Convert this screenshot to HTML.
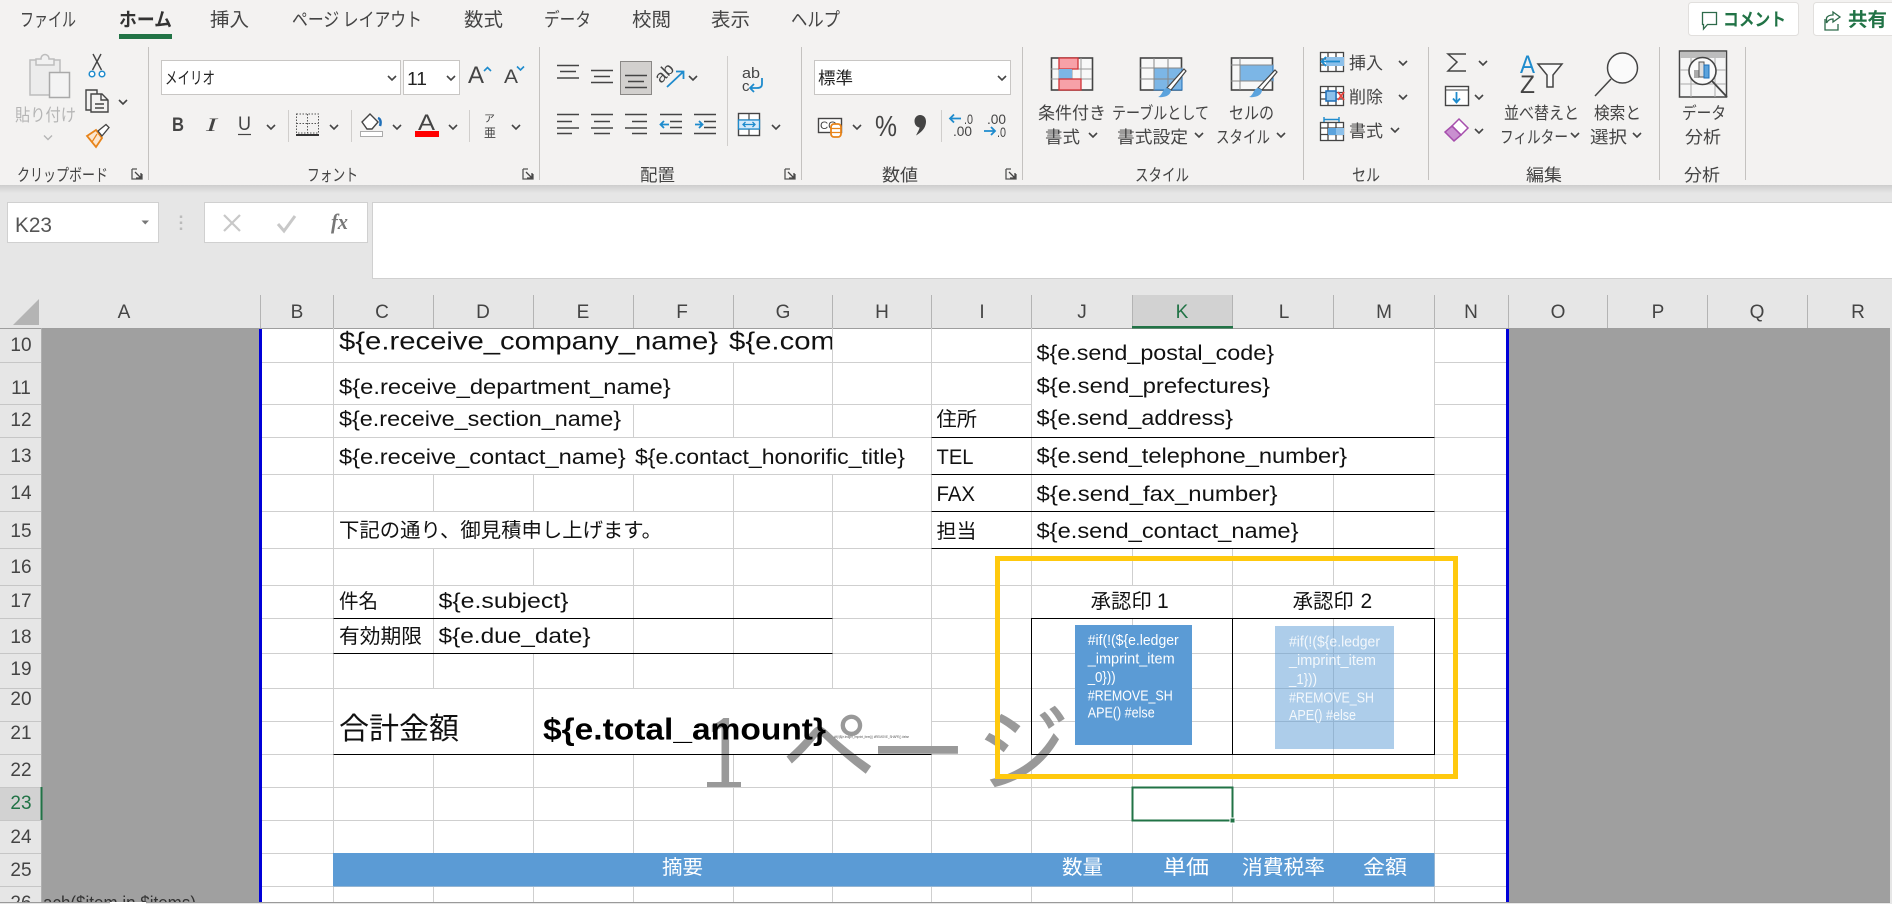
<!DOCTYPE html>
<html lang="ja"><head><meta charset="utf-8"><title>Excel</title>
<style>
html,body{margin:0;padding:0;background:#e6e6e6;width:1892px;height:904px;overflow:hidden}
svg{display:block;position:absolute;left:0;top:0}
text{font-family:"Liberation Sans","Noto Sans CJK JP",sans-serif;white-space:pre}
.j text,text.j{font-family:"Noto Sans CJK JP","Liberation Sans",sans-serif}
.rb text{fill:#444}
.hd text{fill:#444;font-size:19px;text-anchor:middle}
.cell text{fill:#111;font-size:21px}
.i{fill:none;stroke:#444;stroke-width:1.4}
.bl{fill:none;stroke:#1e8bcd;stroke-width:1.8}
</style></head><body>
<svg width="1892" height="904" viewBox="0 0 1892 904" xmlns="http://www.w3.org/2000/svg">
<defs>
<path id="c" d="M-4-2L0 2L4-2" fill="none" stroke="#444" stroke-width="1.6"/>
<g id="ln" fill="none" stroke="#555" stroke-width="1.3"><path d="M1 1H6M1 1V11H11V6"/><path d="M4 4L10 10M10 5V10H5" stroke="#444"/></g>
<linearGradient id="sh" x1="0" y1="0" x2="0" y2="1"><stop offset="0" stop-color="#cdcdcd"/><stop offset="1" stop-color="#e6e6e6"/></linearGradient>
<clipPath id="cp1"><rect x="334" y="329" width="498" height="33"/></clipPath>
<clipPath id="cp2"><rect x="43" y="880" width="216" height="22"/></clipPath>
<clipPath id="cp3"><rect x="0" y="887" width="42" height="15"/></clipPath>
</defs>

<!-- backgrounds -->
<rect width="1892" height="904" fill="#e6e6e6"/>
<rect width="1892" height="185" fill="#f3f2f1"/>
<rect y="185" width="1892" height="8" fill="url(#sh)"/>

<!-- tabs -->
<g class="rb j" font-size="19">
<text x="20" y="26" textLength="56" lengthAdjust="spacingAndGlyphs">ファイル</text>
<text x="119" y="26" textLength="53" lengthAdjust="spacingAndGlyphs" font-weight="700" style="fill:#333">ホーム</text>
<text x="210" y="26" textLength="39" lengthAdjust="spacingAndGlyphs">挿入</text>
<text x="292" y="26" textLength="130" lengthAdjust="spacingAndGlyphs">ページ レイアウト</text>
<text x="464" y="26" textLength="39" lengthAdjust="spacingAndGlyphs">数式</text>
<text x="544" y="26" textLength="47" lengthAdjust="spacingAndGlyphs">データ</text>
<text x="632" y="26" textLength="39" lengthAdjust="spacingAndGlyphs">校閲</text>
<text x="711" y="26" textLength="39" lengthAdjust="spacingAndGlyphs">表示</text>
<text x="791" y="26" textLength="49" lengthAdjust="spacingAndGlyphs">ヘルプ</text>
</g>
<rect x="119" y="34" width="53" height="5" fill="#217346"/>

<!-- comment / share -->
<rect x="1688.500" y="2.500" width="110" height="33" rx="3" fill="#fff" stroke="#e1dfdd"/>
<rect x="1813.500" y="2.500" width="100" height="33" rx="3" fill="#fff" stroke="#e1dfdd"/>
<path d="M1702.500 12.500H1716.500V24.500H1707.500L1703.500 29V24.500H1702.500Z" fill="none" stroke="#2d6a4a" stroke-width="1.3"/>
<text class="j" x="1723" y="26" font-size="18" font-weight="700" fill="#217346" textLength="63" lengthAdjust="spacingAndGlyphs">コメント</text>
<path d="M1833 12L1840 17L1833 22V19C1830 19 1828 20 1826.500 23V18C1827.500 16 1830 15 1833 15ZM1825 19V30H1838V24" fill="none" stroke="#2d6a4a" stroke-width="1.3"/>
<text class="j" x="1848" y="26" font-size="19" font-weight="700" fill="#217346" textLength="39" lengthAdjust="spacingAndGlyphs">共有</text>

<!-- group separators -->
<path d="M148.500 47V180M539.500 47V180M801.500 47V180M1022.500 47V180M1303.500 47V180M1428.500 47V180M1659.500 47V180M1745.500 47V180" stroke="#c4c2c0" fill="none"/>

<!-- group labels -->
<g class="rb j" font-size="17">
<text x="17" y="181" textLength="91" lengthAdjust="spacingAndGlyphs">クリップボード</text>
<text x="307" y="181" textLength="51" lengthAdjust="spacingAndGlyphs">フォント</text>
<text x="640" y="181" textLength="35" lengthAdjust="spacingAndGlyphs">配置</text>
<text x="882" y="181" textLength="36" lengthAdjust="spacingAndGlyphs">数値</text>
<text x="1135" y="181" textLength="54" lengthAdjust="spacingAndGlyphs">スタイル</text>
<text x="1352" y="181" textLength="28" lengthAdjust="spacingAndGlyphs">セル</text>
<text x="1526" y="181" textLength="36" lengthAdjust="spacingAndGlyphs">編集</text>
<text x="1684" y="181" textLength="36" lengthAdjust="spacingAndGlyphs">分析</text>
</g>
<use href="#ln" x="131" y="168"/><use href="#ln" x="522" y="168"/><use href="#ln" x="784" y="168"/><use href="#ln" x="1005" y="168"/>

<!-- clipboard -->
<rect x="30" y="60" width="30" height="35" fill="#ececec" stroke="#bdbdbd" stroke-width="1.500"/>
<path d="M36 65V59H41C41 53 49 53 49 59H54V65Z" fill="#f1f1f1" stroke="#bdbdbd" stroke-width="1.500"/>
<rect x="49.500" y="72.500" width="20" height="25" fill="#f3f3f3" stroke="#a9a9a9" stroke-width="1.500"/>
<text class="j" x="15" y="121" font-size="17" fill="#b5b5b5" textLength="61" lengthAdjust="spacingAndGlyphs">貼り付け</text>
<path d="M44 135.500L48 139.500L52 135.500" fill="none" stroke="#b5b5b5" stroke-width="1.400"/>
<path d="M92.500 70L101 54M101.500 70L93 54" class="i"/>
<circle cx="92" cy="74" r="2.800" fill="#fff" stroke="#1e8bcd" stroke-width="1.500"/><circle cx="102" cy="74" r="2.800" fill="#fff" stroke="#1e8bcd" stroke-width="1.500"/>
<path d="M91 110H86V90H97V94M91 94H102L108 100V112H91ZM101 94V100H108M95 104H104M95 108H104" class="i" fill="none"/>
<use href="#c" x="123" y="102"/>
<path d="M87 136L96 130L102 138L96 147Z" fill="#fbe6cf" stroke="#e8841a" stroke-width="1.800"/>
<path d="M92 142L97 134" stroke="#e8841a" stroke-width="1.200"/>
<path d="M98 131L106 124.500L109 127.500L102 136Z" fill="#fff" stroke="#444" stroke-width="1.300"/>

<!-- font -->
<rect x="161.500" y="60.500" width="239" height="34" fill="#fff" stroke="#c8c6c4"/>
<rect x="403.500" y="60.500" width="56" height="34" fill="#fff" stroke="#c8c6c4"/>
<text class="j" x="165" y="84" font-size="17" fill="#222" textLength="50" lengthAdjust="spacingAndGlyphs">メイリオ</text>
<text x="407" y="85" font-size="18" fill="#222" textLength="20" lengthAdjust="spacingAndGlyphs">11</text>
<use href="#c" x="392" y="78"/><use href="#c" x="451" y="78"/>
<text x="468" y="83" font-size="24" fill="#444" textLength="16" lengthAdjust="spacingAndGlyphs">A</text>
<path d="M484 71L487.500 67.500L491 71" fill="none" stroke="#1e8bcd" stroke-width="1.600"/>
<text x="504" y="83" font-size="19" fill="#444" textLength="14" lengthAdjust="spacingAndGlyphs">A</text>
<path d="M517 66.500L520.500 70L524 66.500" fill="none" stroke="#1e8bcd" stroke-width="1.600"/>
<text x="172" y="131" font-size="19" font-weight="700" fill="#444" textLength="12" lengthAdjust="spacingAndGlyphs">B</text>
<text x="206" y="131" font-size="19" font-style="italic" fill="#444" textLength="11" lengthAdjust="spacingAndGlyphs" style="font-family:'Liberation Serif',serif">I</text>
<text x="238" y="130" font-size="19" fill="#444" textLength="13" lengthAdjust="spacingAndGlyphs">U</text><path d="M238 134.500H251" stroke="#444" stroke-width="1.200"/>
<use href="#c" x="271" y="127"/>
<path d="M288.500 110V142M351.500 110V142M469.500 110V142M941.500 110V142" stroke="#d0cecc"/>
<path d="M296.500 114H318.500V133H296.500ZM307.500 114V133M296.500 123.500H318.500" fill="none" stroke="#555" stroke-dasharray="1.500 1.500"/>
<rect x="296" y="134" width="23" height="2" fill="#333"/>
<use href="#c" x="334" y="127"/>
<path d="M362 122L370 114L378 122L372 129L367 129Z" fill="#fff" stroke="#444" stroke-width="1.400"/>
<path d="M378 118C381 119 381 123 380 126" fill="none" stroke="#1e6fb8" stroke-width="2.500"/>
<rect x="360.500" y="131.500" width="22" height="5" fill="#fff" stroke="#aaa"/>
<use href="#c" x="397" y="127"/>
<text x="418" y="130" font-size="22" fill="#444" textLength="17" lengthAdjust="spacingAndGlyphs">A</text>
<rect x="415" y="131" width="24" height="6" fill="#f00"/>
<use href="#c" x="453" y="127"/>
<text class="j" x="484" y="122" font-size="10" fill="#444" textLength="11" lengthAdjust="spacingAndGlyphs">ア</text>
<text class="j" x="484" y="137" font-size="12" fill="#444" textLength="12" lengthAdjust="spacingAndGlyphs">亜</text>
<use href="#c" x="516" y="127"/>

<!-- alignment -->
<rect x="620.500" y="61.500" width="31" height="33" fill="#d2d0ce" stroke="#8a8886"/>
<path d="M557 65.500H579M560 71.500H576M557 78H579M591 70.500H613M594 76.500H610M591 82.500H613M625 75.500H647M628 81.500H644M625 87.500H647" stroke="#444" stroke-width="1.500" fill="none"/>
<text x="661" y="84" font-size="17" fill="#444" transform="rotate(-45 661 84)" textLength="20" lengthAdjust="spacingAndGlyphs">ab</text>
<path d="M667 87L683 72M676 71.500H683.500V79" class="bl"/>
<use href="#c" x="693" y="78"/>
<path d="M727.500 56V146" stroke="#d0cecc"/>
<text x="742" y="78" font-size="15" fill="#444" textLength="18" lengthAdjust="spacingAndGlyphs">ab</text>
<text x="742" y="91" font-size="15" fill="#444">c</text>
<path d="M762 78V84C762 87 760 88 757 88H750M754 84L750 88L754 92" class="bl"/>
<path d="M557 114.500H579M557 121.500H572M557 128H579M557 133.500H572M591 114.500H613M594 121.500H610M591 128H613M594 133.500H610M625 114.500H647M632 121.500H647M625 128H647M632 133.500H647" stroke="#444" stroke-width="1.500" fill="none"/>
<path d="M660 114.500H682M670 121.500H682M670 127.500H682M660 133.500H682M694 114.500H716M704 121.500H716M704 127.500H716M694 133.500H716" stroke="#444" stroke-width="1.500" fill="none"/>
<path d="M669 124.500H661M664 121L660.500 124.500L664 128M695 124.500H702.500M699 121L702.500 124.500L699 128" class="bl"/>
<rect x="738.500" y="113.500" width="21" height="22" fill="#fff" stroke="#444" stroke-width="1.400"/>
<path d="M738.500 120H759.500M738.500 129H759.500M749 113.500V120M749 129V135.500" stroke="#444" stroke-width="1.200"/>
<path d="M738.500 120H759.500V129H738.500Z" fill="#d7eafa" stroke="#1e8bcd" stroke-width="1.300"/>
<path d="M743 124.500H755M745.500 122L743 124.500L745.500 127M752.500 122L755 124.500L752.500 127" fill="none" stroke="#1e8bcd" stroke-width="1.300"/>
<use href="#c" x="776" y="127"/>

<!-- number -->
<rect x="814.500" y="60.500" width="196" height="34" fill="#fff" stroke="#c8c6c4"/>
<text class="j" x="818" y="84" font-size="17" fill="#222" textLength="35" lengthAdjust="spacingAndGlyphs">標準</text>
<use href="#c" x="1002" y="78"/>
<rect x="818.500" y="118.500" width="23" height="14" fill="#fff" stroke="#444" stroke-width="1.400"/>
<text x="820" y="129" font-size="11" fill="#444" textLength="17" lengthAdjust="spacingAndGlyphs">CO</text>
<rect x="831" y="124" width="10" height="13" rx="3" fill="#fff" stroke="#e8841a" stroke-width="1.800"/>
<path d="M831 128.500H841M831 132.500H841" stroke="#e8841a" stroke-width="1.200"/>
<use href="#c" x="857" y="127"/>
<text x="875" y="136" font-size="29" fill="#444" textLength="22" lengthAdjust="spacingAndGlyphs">%</text>
<path d="M920 115C923.500 115 926 117.500 926 121.500C926 127.500 922 132 916 135.500C918 131.500 919.500 129 919.500 127.500C916.500 127 914.500 124.500 914.500 121C914.500 117.500 917 115 920 115Z" fill="#444"/>
<path d="M961 118.500H950M954 114.500L950 118.500L954 122.500" class="bl"/>
<text x="964" y="124" font-size="14" fill="#444" textLength="9" lengthAdjust="spacingAndGlyphs">.0</text>
<text x="953" y="136" font-size="14" fill="#444" textLength="19" lengthAdjust="spacingAndGlyphs">.00</text>
<text x="987" y="124" font-size="14" fill="#444" textLength="19" lengthAdjust="spacingAndGlyphs">.00</text>
<path d="M984 131H995M991 127L995 131L991 135" class="bl"/>
<text x="997" y="137" font-size="14" fill="#444" textLength="9" lengthAdjust="spacingAndGlyphs">.0</text>

<!-- cond fmt -->
<rect x="1051.500" y="58" width="41" height="32" fill="#f8f8f8" stroke="#444" stroke-width="1.600"/>
<path d="M1059 58V90M1072 58V90M1081 58V90M1051 69H1092M1051 79H1092" stroke="#999"/>
<rect x="1059" y="58" width="19" height="11" fill="#f7a1a8" stroke="#d13438" stroke-width="1.300"/>
<rect x="1059" y="69" width="13" height="10" fill="#7cb6e6"/>
<rect x="1059" y="79" width="22" height="11" fill="#f7a1a8" stroke="#d13438" stroke-width="1.300"/>
<!-- table -->
<rect x="1140.500" y="58" width="41" height="32" fill="#f8f8f8" stroke="#444" stroke-width="1.600"/>
<rect x="1154" y="68" width="28" height="22" fill="#7cb6e6" stroke="#1e6fb8"/>
<path d="M1154 58V90M1168 58V90M1140 68H1182M1140 79H1182" stroke="#888"/>
<path d="M1184 69L1186 71L1171 90L1167 88Z" fill="#fff" stroke="#444" stroke-width="1.200"/>
<path d="M1167 88C1162 89 1163 95 1158 97C1165 98 1171 95 1171 90Z" fill="#5ba3dd"/>
<!-- cell style -->
<rect x="1231.500" y="58" width="41" height="32" fill="#f8f8f8" stroke="#444" stroke-width="1.600"/>
<rect x="1240" y="65" width="33" height="16" fill="#7cb6e6" stroke="#1e6fb8"/>
<path d="M1240 58V90M1231 65H1273M1231 81H1273" stroke="#888"/>
<path d="M1275 70L1277 72L1262 90L1258 88Z" fill="#fff" stroke="#444" stroke-width="1.200"/>
<path d="M1258 88C1253 89 1254 95 1249 97C1256 98 1262 95 1262 90Z" fill="#5ba3dd"/>
<g class="rb j" font-size="17">
<text x="1038" y="119" textLength="68" lengthAdjust="spacingAndGlyphs">条件付き</text>
<text x="1045" y="143" textLength="35" lengthAdjust="spacingAndGlyphs">書式</text>
<text x="1112" y="119" textLength="97" lengthAdjust="spacingAndGlyphs">テーブルとして</text>
<text x="1117" y="143" textLength="71" lengthAdjust="spacingAndGlyphs">書式設定</text>
<text x="1229" y="119" textLength="45" lengthAdjust="spacingAndGlyphs">セルの</text>
<text x="1216" y="143" textLength="54" lengthAdjust="spacingAndGlyphs">スタイル</text>
</g>
<use href="#c" x="1093" y="135"/><use href="#c" x="1199" y="135"/><use href="#c" x="1281" y="135"/>

<!-- cells -->
<g fill="none" stroke="#444" stroke-width="1.300">
<rect x="1320.500" y="52.500" width="23" height="19" fill="#fff"/><path d="M1328 52V72M1336 52V72M1320 59H1344M1320 65H1344"/>
<rect x="1320.500" y="86.500" width="23" height="19" fill="#fff"/><path d="M1328 86V106M1336 86V106M1320 92.500H1344M1320 99H1344"/>
<rect x="1320.500" y="122.500" width="23" height="18" fill="#fff"/><path d="M1328 122V141M1336 122V141M1320 128H1344M1320 134.500H1344"/>
</g>
<rect x="1326" y="57" width="18" height="9" fill="#8cc0ea"/>
<path d="M1340 61.500H1322M1326 57L1321.500 61.500L1326 66" class="bl"/>
<rect x="1326" y="91" width="10" height="10" fill="#8cc0ea" stroke="#1e6fb8" stroke-width="1.500"/>
<path d="M1338 92L1344 100M1344 92L1338 100" stroke="#e8423c" stroke-width="1.800"/>
<rect x="1328" y="128" width="16" height="7" fill="#8cc0ea"/><rect x="1328" y="128" width="8" height="7" fill="#5ba3dd"/>
<path d="M1324 119.500H1339M1324 117V122M1339 117V122" stroke="#1e8bcd" stroke-width="1.400" fill="none"/>
<g class="rb j" font-size="17">
<text x="1349" y="69" textLength="34" lengthAdjust="spacingAndGlyphs">挿入</text>
<text x="1349" y="103" textLength="34" lengthAdjust="spacingAndGlyphs">削除</text>
<text x="1349" y="137" textLength="34" lengthAdjust="spacingAndGlyphs">書式</text>
</g>
<use href="#c" x="1403" y="63"/><use href="#c" x="1403" y="97"/><use href="#c" x="1395" y="130"/>

<!-- editing -->
<path d="M1466 54H1448L1457 62L1448 71H1466" fill="none" stroke="#444" stroke-width="1.500"/>
<use href="#c" x="1483" y="63"/>
<rect x="1445.500" y="86.500" width="23" height="19" fill="#fff" stroke="#444" stroke-width="1.400"/><path d="M1445 90H1469" stroke="#444"/>
<path d="M1456.500 92V102M1453 98.500L1456.500 102.500L1460 98.500" class="bl"/>
<use href="#c" x="1479" y="97"/>
<path d="M1459 119L1468 128L1461 135L1452 126Z" fill="#fff" stroke="#a64ead" stroke-width="1.500"/>
<path d="M1452 126L1461 135L1454 141L1445 132Z" fill="#c98fd0" stroke="#a64ead" stroke-width="1.500"/>
<use href="#c" x="1479" y="131"/>
<text x="1520" y="73" font-size="25" fill="#1e8bcd" textLength="15" lengthAdjust="spacingAndGlyphs">A</text>
<text x="1520" y="93" font-size="25" fill="#444" textLength="15" lengthAdjust="spacingAndGlyphs">Z</text>
<path d="M1538 64H1562L1553 75V87H1547V75Z" fill="#fafafa" stroke="#444" stroke-width="1.500"/>
<circle cx="1622.500" cy="68" r="15" fill="#fafafa" stroke="#444" stroke-width="1.500"/>
<path d="M1611 79L1595 96" stroke="#444" stroke-width="1.500"/>
<g class="rb j" font-size="17">
<text x="1504" y="119" textLength="75" lengthAdjust="spacingAndGlyphs">並べ替えと</text>
<text x="1500" y="143" textLength="68" lengthAdjust="spacingAndGlyphs">フィルター</text>
<text x="1594" y="119" textLength="47" lengthAdjust="spacingAndGlyphs">検索と</text>
<text x="1590" y="143" textLength="37" lengthAdjust="spacingAndGlyphs">選択</text>
<text x="1682" y="119" textLength="44" lengthAdjust="spacingAndGlyphs">データ</text>
<text x="1685" y="143" textLength="36" lengthAdjust="spacingAndGlyphs">分析</text>
</g>
<use href="#c" x="1575" y="135"/><use href="#c" x="1637" y="135"/>
<!-- data analysis -->
<rect x="1679.500" y="51" width="47" height="46" fill="#f6f6f6" stroke="#444" stroke-width="1.500"/>
<rect x="1680" y="52" width="46" height="6" fill="#bdbdbd"/>
<path d="M1680 70H1726M1680 84H1726M1691 58V97M1715 58V97" stroke="#aaa"/>
<circle cx="1702.500" cy="71" r="13.500" fill="#fafafa" stroke="#444" stroke-width="1.600"/>
<rect x="1694" y="70" width="5" height="8" fill="#aaa"/><rect x="1699" y="62" width="5" height="15" fill="#ddd" stroke="#555"/><rect x="1704" y="65" width="5" height="13" fill="#5ba3dd" stroke="#1e6fb8"/>
<path d="M1712 81L1727 97" stroke="#444" stroke-width="1.800"/>

<!-- formula bar -->
<rect x="7.500" y="202.500" width="151" height="40" fill="#fff" stroke="#d0d0d0"/>
<text x="15" y="232" font-size="21" fill="#555" textLength="37" lengthAdjust="spacingAndGlyphs">K23</text>
<path d="M141.500 220.500H149L145.250 224.500Z" fill="#777"/>
<path d="M181 215.500V218M181 221.500V224M181 227.500V230" stroke="#bbb" stroke-width="2.500"/>
<rect x="204.500" y="202.500" width="163" height="40" fill="#fff" stroke="#d0d0d0"/>
<path d="M224 215L240 231M240 215L224 231" stroke="#c8c8c8" stroke-width="2.200"/>
<path d="M278 224L284 231L295 216" fill="none" stroke="#c8c8c8" stroke-width="3"/>
<text x="331" y="229" font-size="22" font-style="italic" font-weight="700" fill="#777" style="font-family:'Liberation Serif',serif" textLength="17" lengthAdjust="spacingAndGlyphs">fx</text>
<rect x="372.500" y="202.500" width="1530" height="76" fill="#fff" stroke="#d0d0d0"/>

<!-- col header -->
<rect x="1132" y="295" width="101" height="33" fill="#d2d2d2"/>
<path d="M39 299V325H13Z" fill="#b4b4b4"/>
<path d="M260.500 295V328M333.500 295V328M433.500 295V328M533.500 295V328M633.500 295V328M733.500 295V328M832.500 295V328M931.500 295V328M1031.500 295V328M1132.500 295V328M1232.500 295V328M1333.500 295V328M1434.500 295V328M1508.500 295V328M1607.500 295V328M1707.500 295V328M1807.500 295V328" stroke="#b4b4b4"/>
<g class="hd">
<text x="124" y="318">A</text><text x="297" y="318">B</text><text x="382" y="318">C</text><text x="483" y="318">D</text><text x="583" y="318">E</text><text x="682" y="318">F</text><text x="783" y="318">G</text><text x="882" y="318">H</text><text x="982" y="318">I</text><text x="1082" y="318">J</text>
<text x="1182" y="318" style="fill:#217346">K</text>
<text x="1284" y="318">L</text><text x="1384" y="318">M</text><text x="1471" y="318">N</text><text x="1558" y="318">O</text><text x="1658" y="318">P</text><text x="1757" y="318">Q</text><text x="1858" y="318">R</text>
</g>

<!-- gray page + white -->
<rect x="42" y="328" width="218" height="574" fill="#a0a0a0"/>
<rect x="1508" y="328" width="382" height="574" fill="#9f9f9f"/>
<rect x="261" y="328" width="1246" height="574" fill="#fff"/>
<rect x="259" y="328" width="3" height="574" fill="#0000d8"/>
<rect x="1506" y="328" width="3" height="574" fill="#0000d8"/>
<rect x="0" y="328" width="1892" height="1" fill="#9e9e9e"/>
<rect x="0" y="902" width="1892" height="1" fill="#9a9a9a"/>

<!-- row header -->
<rect x="0" y="787" width="42" height="33" fill="#d2d2d2"/>
<path d="M0 362.500H42M0 404.500H42M0 437.500H42M0 474.500H42M0 511.500H42M0 548.500H42M0 585.500H42M0 618.500H42M0 653.500H42M0 688.500H42M0 721.500H42M0 754.500H42M0 787.500H42M0 820.500H42M0 853.500H42M0 886.500H42" stroke="#c6c6c6"/>
<path d="M41.500 328V902" stroke="#b0b0b0"/>
<path d="M41.500 787V820" stroke="#217346" stroke-width="2"/>
<g class="hd">
<text x="21" y="351">10</text><text x="21" y="394">11</text><text x="21" y="426">12</text><text x="21" y="462">13</text><text x="21" y="499">14</text><text x="21" y="537">15</text><text x="21" y="573">16</text><text x="21" y="607">17</text><text x="21" y="643">18</text><text x="21" y="675">19</text><text x="21" y="705">20</text><text x="21" y="739">21</text><text x="21" y="776">22</text>
<text x="21" y="809" style="fill:#217346">23</text>
<text x="21" y="843">24</text><text x="21" y="876">25</text>
<text x="21" y="909" clip-path="url(#cp3)">26</text>
</g>
<text x="43" y="909" font-size="18" fill="#333" clip-path="url(#cp2)" textLength="153" lengthAdjust="spacingAndGlyphs">ach($item in $items)</text>

<!-- gridlines -->
<path fill="none" stroke="#cfcfcf" d="
M262 362.500H1031.500M1434.500 362.500H1506
M262 404.500H1031.500M1434.500 404.500H1506
M262 437.500H931.500M1434.500 437.500H1506
M262 474.500H931.500M1434.500 474.500H1506
M262 511.500H931.500M1434.500 511.500H1506
M262 548.500H931.500M1434.500 548.500H1506
M262 585.500H1506
M262 618.500H1506
M262 653.500H1506
M262 688.500H1506
M262 721.500H333.500M931.500 721.500H1506
M262 754.500H1506
M262 787.500H1506
M262 820.500H1506
M262 853.500H1506
M262 886.500H1506
M333.500 328V902
M433.500 474V511M433.500 548V688M433.500 754V902
M533.500 474V511M533.500 548V585M533.500 653V902
M633.500 404V437M633.500 474V511M633.500 548V688M633.500 754V902
M733.500 362V437M733.500 474V688M733.500 754V902
M832.500 328V437M832.500 474V688M832.500 754V902
M931.500 328V902
M1031.500 328V902
M1132.500 548V585M1132.500 618V902
M1232.500 548V902
M1333.500 474V585M1333.500 618V902
M1434.500 328V902"/>

<!-- watermark -->
<g fill="#999">
<text x="701" y="787" font-size="92" style="font-family:'IPAGothic','Noto Sans CJK JP',sans-serif">1</text>
<rect x="707" y="782" width="34" height="5"/>
<text x="780 869 973" y="787" font-size="98" style="font-family:'IPAGothic','Noto Sans CJK JP',sans-serif">ページ</text>
</g>
<text x="834" y="738" font-size="3.500" fill="#555" textLength="75" lengthAdjust="spacingAndGlyphs">#if(!(${e.ledger_imprint_item})) #REMOVE_SHAPE() #else</text>

<!-- black borders -->
<path fill="none" stroke="#000" d="M931.500 437.500H1434.500M931.500 474.500H1434.500M931.500 511.500H1434.500M931.500 548.500H1434.500M333.500 618.500H832.500M333.500 653.500H832.500M333.500 754.500H931.500"/>
<rect x="1031.500" y="618.500" width="403" height="136" fill="none" stroke="#000"/>
<path d="M1232.500 618.500V754.500" stroke="#000"/>

<!-- band -->
<rect x="333" y="853" width="1101.500" height="33.500" fill="#5b9bd5"/>
<g class="j" fill="#fff" font-size="20">
<text x="662" y="874" textLength="41" lengthAdjust="spacingAndGlyphs">摘要</text>
<text x="1062" y="874" textLength="41" lengthAdjust="spacingAndGlyphs">数量</text>
<text x="1163" y="874" textLength="46" lengthAdjust="spacingAndGlyphs">単価</text>
<text x="1242" y="874" textLength="83" lengthAdjust="spacingAndGlyphs">消費税率</text>
<text x="1363" y="874" textLength="44" lengthAdjust="spacingAndGlyphs">金額</text>
</g>

<!-- cell text -->
<g class="cell">
<text x="339" y="349.500" style="font-size:25px" textLength="379" lengthAdjust="spacingAndGlyphs">${e.receive_company_name}</text>
<text x="729" y="349.500" style="font-size:25px" clip-path="url(#cp1)" textLength="106" lengthAdjust="spacingAndGlyphs">${e.com</text>
<text x="339" y="394" textLength="331.700" lengthAdjust="spacingAndGlyphs">${e.receive_department_name}</text>
<text x="339" y="426" textLength="282" lengthAdjust="spacingAndGlyphs">${e.receive_section_name}</text>
<text x="339" y="464" textLength="286.700" lengthAdjust="spacingAndGlyphs">${e.receive_contact_name}</text>
<text x="635" y="464" textLength="270" lengthAdjust="spacingAndGlyphs">${e.contact_honorific_title}</text>
<text class="j" x="339" y="537" style="font-size:20px" textLength="323" lengthAdjust="spacingAndGlyphs">下記の通り、御見積申し上げます。</text>
<text class="j" x="339" y="608" style="font-size:20px" textLength="39" lengthAdjust="spacingAndGlyphs">件名</text>
<text x="438.500" y="608" textLength="130" lengthAdjust="spacingAndGlyphs">${e.subject}</text>
<text class="j" x="339" y="643" style="font-size:20px" textLength="83" lengthAdjust="spacingAndGlyphs">有効期限</text>
<text x="438.500" y="643" textLength="152" lengthAdjust="spacingAndGlyphs">${e.due_date}</text>
<text class="j" x="339" y="739" style="font-size:30px" textLength="120" lengthAdjust="spacingAndGlyphs">合計金額</text>
<text x="543" y="739.500" style="font-size:31px;font-weight:700;fill:#000" textLength="283" lengthAdjust="spacingAndGlyphs">${e.total_amount}</text>
<text x="1036.500" y="360" textLength="237.500" lengthAdjust="spacingAndGlyphs">${e.send_postal_code}</text>
<text x="1036.500" y="393" textLength="233.500" lengthAdjust="spacingAndGlyphs">${e.send_prefectures}</text>
<text x="1036.500" y="425" textLength="196.500" lengthAdjust="spacingAndGlyphs">${e.send_address}</text>
<text x="1036.500" y="463" textLength="310.500" lengthAdjust="spacingAndGlyphs">${e.send_telephone_number}</text>
<text x="1036.500" y="501" textLength="241" lengthAdjust="spacingAndGlyphs">${e.send_fax_number}</text>
<text x="1036.500" y="538" textLength="262" lengthAdjust="spacingAndGlyphs">${e.send_contact_name}</text>
<text class="j" x="936.500" y="426" style="font-size:20px" textLength="40.500" lengthAdjust="spacingAndGlyphs">住所</text>
<text x="936.500" y="464" textLength="37" lengthAdjust="spacingAndGlyphs">TEL</text>
<text x="936.500" y="501" textLength="38.500" lengthAdjust="spacingAndGlyphs">FAX</text>
<text class="j" x="936.500" y="538" style="font-size:20px" textLength="40" lengthAdjust="spacingAndGlyphs">担当</text>
<text class="j" x="1090.700" y="608" style="font-size:20px" textLength="61" lengthAdjust="spacingAndGlyphs">承認印</text>
<text x="1157" y="608">1</text>
<text class="j" x="1292.700" y="608" style="font-size:20px" textLength="61" lengthAdjust="spacingAndGlyphs">承認印</text>
<text x="1360.500" y="608">2</text>
</g>

<!-- shapes -->
<rect x="1075" y="625" width="117" height="120" fill="#5b9bd5"/>
<g fill="#fff" font-size="15">
<text x="1087.700" y="645" textLength="91" lengthAdjust="spacingAndGlyphs">#if(!(${e.ledger</text>
<text x="1087.700" y="663.300" textLength="87" lengthAdjust="spacingAndGlyphs">_imprint_item</text>
<text x="1087.700" y="682" textLength="28" lengthAdjust="spacingAndGlyphs">_0}))</text>
<text x="1087.700" y="700.700" textLength="85" lengthAdjust="spacingAndGlyphs">#REMOVE_SH</text>
<text x="1087.700" y="717.700" textLength="67" lengthAdjust="spacingAndGlyphs">APE() #else</text>
</g>
<rect x="1275" y="626" width="119" height="123" fill="#5b9bd5" fill-opacity=".5"/>
<g fill="#fff" fill-opacity=".85" font-size="15">
<text x="1289" y="646.700" textLength="91" lengthAdjust="spacingAndGlyphs">#if(!(${e.ledger</text>
<text x="1289" y="665" textLength="87" lengthAdjust="spacingAndGlyphs">_imprint_item</text>
<text x="1289" y="684" textLength="28" lengthAdjust="spacingAndGlyphs">_1}))</text>
<text x="1289" y="702.300" textLength="85" lengthAdjust="spacingAndGlyphs">#REMOVE_SH</text>
<text x="1289" y="720" textLength="67" lengthAdjust="spacingAndGlyphs">APE() #else</text>
</g>

<!-- selection -->
<rect x="1132.500" y="787.500" width="100" height="33" fill="none" stroke="#217346" stroke-width="2"/>
<rect x="1230" y="818" width="5" height="5" fill="#217346" stroke="#fff"/>
<rect x="1132" y="326" width="101" height="2.500" fill="#217346"/>

<!-- yellow frame -->
<rect x="997.500" y="558.500" width="458" height="218" fill="none" stroke="#ffc90e" stroke-width="5"/>

<!-- bottom strip -->
<rect x="0" y="903" width="1892" height="1" fill="#e6e6e6"/>
<rect x="110" y="902" width="36" height="2" fill="#fff"/>
<rect x="1890" y="328" width="2" height="576" fill="#e6e6e6"/>
</svg>
</body></html>
